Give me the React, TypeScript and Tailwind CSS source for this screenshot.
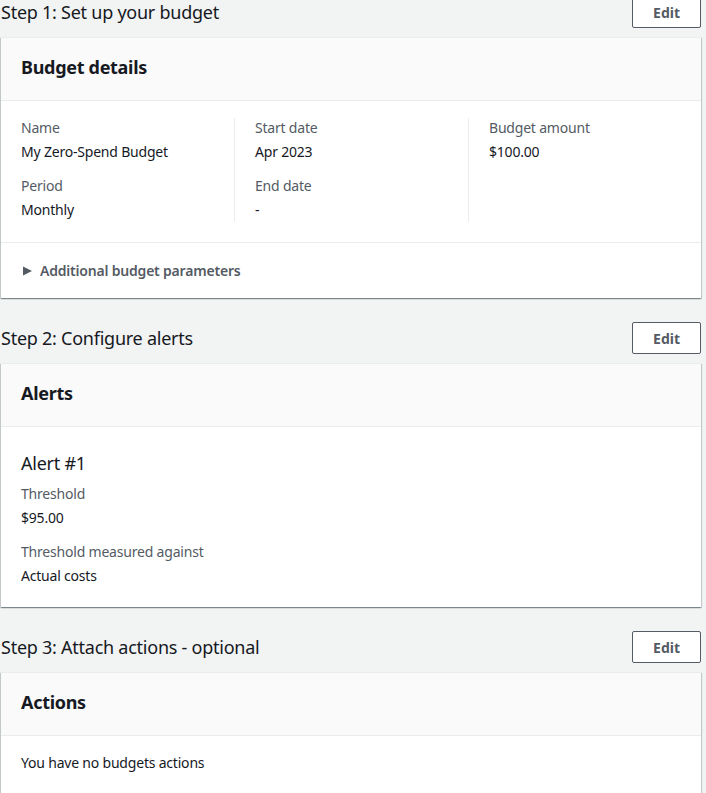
import React from 'react';

const font = { fontFamily: '"Noto Sans", "Open Sans", Arial, sans-serif' };

function StepHeader({ title, first }: { title: string; first?: boolean }) {
  return (
    <div className={`flex items-end justify-between ${first ? '-mt-[4px]' : 'pt-[24px]'} pb-[9px]`}>
      <h2 className="text-[18px] leading-[22px] tracking-[-0.25px] text-[#16191f] pb-[5px]">{title}</h2>
      <button className="h-[32px] px-[20px] border border-[#545b64] rounded-[2px] bg-white text-[14px] font-bold text-[#545b64]">
        Edit
      </button>
    </div>
  );
}

function Card({ title, children }: { title: string; children: React.ReactNode }) {
  return (
    <div className="bg-white border-t border-[#eaeded] shadow-[0_1px_1px_0_rgba(0,28,36,0.3),1px_1px_1px_0_rgba(0,28,36,0.15),-1px_1px_1px_0_rgba(0,28,36,0.15)]">
      <div className="h-[63px] bg-[#fafafa] border-b border-[#eaeded] px-[20px] flex items-center pb-[4px]">
        <h3 className="text-[18px] leading-[24px] font-bold tracking-[-0.3px] text-[#16191f]">{title}</h3>
      </div>
      {children}
    </div>
  );
}

function Field({ label, value }: { label: string; value: string }) {
  return (
    <div className="tracking-[-0.2px]">
      <div className="text-[14px] leading-[20px] text-[#545b64]">{label}</div>
      <div className="mt-[4px] text-[14px] leading-[20px] text-[#16191f]">{value}</div>
    </div>
  );
}

export default function App() {
  return (
    <div className="min-h-[793px] bg-[#f2f3f3] overflow-hidden" style={font}>
      <div className="pl-[1px] pr-[5px]">
        <StepHeader title="Step 1: Set up your budget" first />
        <Card title="Budget details">
          <div className="px-[20px] pt-[17px] pb-[20px]">
            <div className="grid grid-cols-[213px_234px_1fr]">
              <div className="flex flex-col gap-[14px] pb-[2px]">
                <Field label="Name" value="My Zero-Spend Budget" />
                <Field label="Period" value="Monthly" />
              </div>
              <div className="flex flex-col gap-[14px] border-l border-[#eaeded] pl-[20px]">
                <Field label="Start date" value="Apr 2023" />
                <Field label="End date" value="-" />
              </div>
              <div className="flex flex-col gap-[14px] border-l border-[#eaeded] pl-[20px]">
                <Field label="Budget amount" value="$100.00" />
              </div>
            </div>
          </div>
          <div className="border-t border-[#eaeded] h-[56px] px-[20px] flex items-center gap-[7px]">
            <svg width="11" height="12" viewBox="0 0 11 12" className="ml-[1px]">
              <path d="M1 1.5 L10 6 L1 10.5 Z" fill="#545b64" />
            </svg>
            <span className="text-[14px] font-semibold tracking-[-0.2px] text-[#545b64]">Additional budget parameters</span>
          </div>
        </Card>

        <StepHeader title="Step 2: Configure alerts" />
        <Card title="Alerts">
          <div className="px-[20px] pt-[20px] pb-[21px]">
            <h4 className="text-[18px] leading-[32px] tracking-[-0.25px] text-[#16191f]">Alert #1</h4>
            <div className="mt-[5px] flex flex-col gap-[14px]">
              <Field label="Threshold" value="$95.00" />
              <Field label="Threshold measured against" value="Actual costs" />
            </div>
          </div>
        </Card>

        <StepHeader title="Step 3: Attach actions - optional" />
        <Card title="Actions">
          <div className="px-[20px] pt-[17px] pb-[20px]">
            <div className="text-[14px] leading-[20px] tracking-[-0.2px] text-[#16191f]">You have no budgets actions</div>
          </div>
        </Card>
      </div>
    </div>
  );
}
